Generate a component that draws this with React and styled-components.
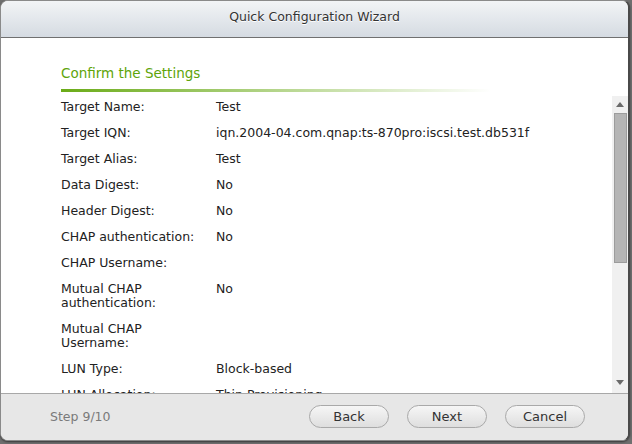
import React from 'react';
import styled, { createGlobalStyle } from 'styled-components';

const Global = createGlobalStyle`
  html, body {
    margin: 0;
    padding: 0;
    background: #6f6f6f;
    width: 632px;
    height: 444px;
    overflow: hidden;
  }
  * { box-sizing: border-box; }
`

const Window = styled.div`
  width: 630px;
  height: 441px;
  background: #fff;
  border: 1px solid #8a8a8a;
  border-right: 2px solid #4a4a4a;
  border-radius: 8px;
  overflow: hidden;
  display: flex;
  flex-direction: column;
  font-family: "DejaVu Sans", Verdana, sans-serif;
  box-shadow: 0 1px 2px rgba(0, 0, 0, 0.5);
`

const TitleBar = styled.div`
  height: 37px;
  flex: none;
  background: linear-gradient(#f2f4f6, #d5dbe2);
  border-bottom: 1px solid #707070;
  display: flex;
  align-items: center;
  justify-content: center;
  font-size: 12.5px;
  color: #333;
  text-shadow: 0 1px 0 #fff;
  padding-bottom: 6px;
`

const Body = styled.div`
  flex: 1;
  display: flex;
  flex-direction: column;
  min-height: 0;
`

const Heading = styled.div`
  margin: 27px 0 0 60px;
  width: 430px;
  height: 31px;
  font-size: 13.5px;
  color: #5ea40a;
  background:
    linear-gradient(to right, #6aab17, #ffffff) left 24px / 100% 3px no-repeat,
    linear-gradient(to right, #b7d98a, #ffffff) left 26px / 100% 1px no-repeat;
`

const Scroller = styled.div`
  flex: 1;
  display: flex;
  min-height: 0;
  overflow: hidden;
`

const List = styled.div`
  flex: 1;
  padding: 4px 0 0 60px;
  font-size: 12.5px;
  color: #222;
`

const Row = styled.div`
  display: flex;
  line-height: 14px;
  margin-bottom: 12px;
`

const Label = styled.div`
  width: 155px;
  flex: none;
  padding-right: 14px;
`

const Value = styled.div`
  white-space: nowrap;
`

const ScrollBar = styled.div`
  width: 16px;
  flex: none;
  background: #f0f0f0;
  display: flex;
  flex-direction: column;
  align-items: center;
  padding-bottom: 3px;
`

const Arrow = styled.div`
  height: 16px;
  width: 16px;
  display: flex;
  align-items: center;
  justify-content: center;
  svg { display: block; }
`

const Thumb = styled.div`
  width: 13px;
  height: 150px;
  margin-top: 1px;
  background: #b5b5b5;
  border: 1px solid #9c9c9c;
`

const Track = styled.div`
  flex: 1;
`

const Footer = styled.div`
  height: 47px;
  flex: none;
  background: #e7e7e7;
  border-top: 1px solid #a8a8a8;
  display: flex;
  align-items: center;
  padding: 0 43px 1px 49px;
  font-size: 12.5px;
`

const Step = styled.div`
  color: #7a7a7a;
  flex: 1;
`

const Button = styled.button`
  width: 80px;
  height: 23px;
  margin-left: 18px;
  border: 1px solid #a9a9a9;
  border-radius: 12px;
  background: linear-gradient(#f6f6f6, #dedede);
  color: #333;
  font-family: "DejaVu Sans", Verdana, sans-serif;
  font-size: 13px;
  padding: 0;
`

const rows = [
  ['Target Name:', 'Test'],
  ['Target IQN:', 'iqn.2004-04.com.qnap:ts-870pro:iscsi.test.db531f'],
  ['Target Alias:', 'Test'],
  ['Data Digest:', 'No'],
  ['Header Digest:', 'No'],
  ['CHAP authentication:', 'No'],
  ['CHAP Username:', ''],
  ['Mutual CHAP authentication:', 'No'],
  ['Mutual CHAP Username:', ''],
  ['LUN Type:', 'Block-based'],
  ['LUN Allocation:', 'Thin Provisioning'],
]

const Tri = ({ up }) => (
  <svg width="8" height="5" viewBox="0 0 8 5">
    <path d={up ? 'M0 5 L4 0 L8 5 Z' : 'M0 0 L8 0 L4 5 Z'} fill="#6a6a6a" />
  </svg>
)

const App = () => {
  return (
    <>
      <Global />
      <Window>
        <TitleBar>Quick Configuration Wizard</TitleBar>
        <Body>
          <Heading>Confirm the Settings</Heading>
          <Scroller>
            <List>
              {rows.map(([l, v]) => (
                <Row key={l}>
                  <Label>{l}</Label>
                  <Value>{v}</Value>
                </Row>
              ))}
            </List>
            <ScrollBar>
              <Arrow><Tri up /></Arrow>
              <Thumb />
              <Track />
              <Arrow><Tri /></Arrow>
            </ScrollBar>
          </Scroller>
        </Body>
        <Footer>
          <Step>Step 9/10</Step>
          <Button>Back</Button>
          <Button>Next</Button>
          <Button>Cancel</Button>
        </Footer>
      </Window>
    </>
  );
};

export default App
